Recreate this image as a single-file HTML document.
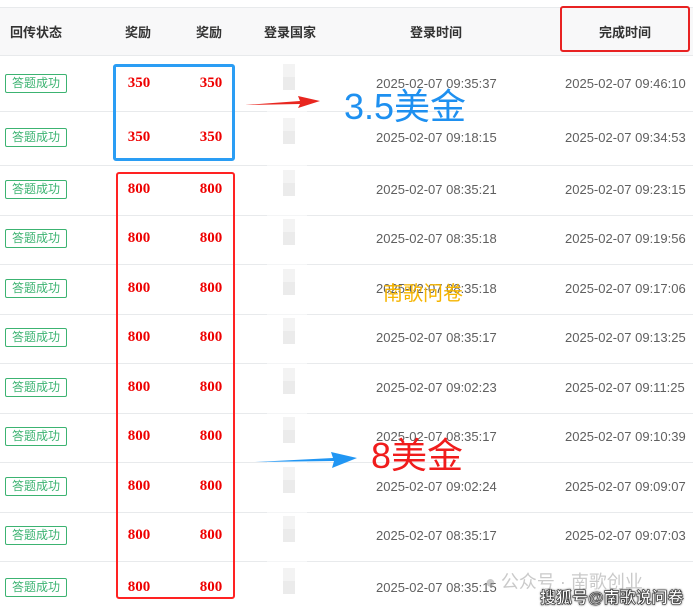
<!DOCTYPE html>
<html><head><meta charset="utf-8"><style>
*{margin:0;padding:0;box-sizing:border-box}
body{width:693px;height:610px;background:#fff;position:relative;overflow:hidden;font-family:"Liberation Sans","Noto Sans CJK SC",sans-serif}
.a{position:absolute}
.hd{position:absolute;left:0;top:7px;width:693px;height:49px;background:#f8f8f9;border-top:1px solid #e8eaec;border-bottom:1px solid #e8eaec}
.hd span{position:absolute;top:14px;font-size:13px;font-weight:bold;color:#333;transform:translateX(-50%);white-space:nowrap}
.line{position:absolute;left:0;width:693px;height:1px;background:#e8eaec}
.tag{position:absolute;left:5px;width:62px;height:19px;border:1px solid #3cb371;border-radius:2px;color:#3cb371;font-size:12px;line-height:17px;text-align:center}
.n{position:absolute;font-family:"Liberation Serif",serif;font-size:15px;font-weight:bold;color:#e00;transform:translateX(-50%)}
.d{position:absolute;font-size:13px;color:#5f5f5f;white-space:nowrap}
.bl{position:absolute;left:283px;width:12px;height:13px;background:#d6d6d6}
</style></head><body>
<div class="hd">
<span style="left:36px">回传状态</span>
<span style="left:138px">奖励</span>
<span style="left:209px">奖励</span>
<span style="left:290px">登录国家</span>
<span style="left:436px">登录时间</span>
<span style="left:625px">完成时间</span>
</div>
<div id="rows"></div>
<script>
var tops=[56,111,165];for(var i=1;i<=8;i++)tops.push(165+i*49.5);
var st=["09:35:37","09:18:15","08:35:21","08:35:18","08:35:18","08:35:17","09:02:23","08:35:17","09:02:24","08:35:17","08:35:15"];
var en=["09:46:10","09:34:53","09:23:15","09:19:56","09:17:06","09:13:25","09:11:25","09:10:39","09:09:07","09:07:03","09:07:35"];
var h="";
for(var i=0;i<11;i++){var t=tops[i],b=i<10?tops[i+1]:615,c=(t+b)/2;
if(i<10)h+='<div class="line" style="top:'+b+'px"></div>';
h+='<div class="tag" style="top:'+(c-10)+'px">答题成功</div>';
var v=i<2?"350":"800";
h+='<div class="n" style="left:139px;top:'+(c-9)+'px">'+v+'</div><div class="n" style="left:211px;top:'+(c-9)+'px">'+v+'</div>';
h+='<div class="bl" style="top:'+(c-20)+'px;opacity:.6"></div><div class="bl" style="top:'+(c-7)+'px"></div>';
h+='<div class="d" style="left:376px;top:'+(c-8)+'px">2025-02-07 '+st[i]+'</div>';
if(i<10)h+='<div class="d" style="left:565px;top:'+(c-8)+'px">2025-02-07 '+en[i]+'</div>';}
document.getElementById('rows').innerHTML=h;
</script>
<div class="a" style="left:267px;top:56px;width:40px;height:554px;background:rgba(255,255,255,.5)"></div>
<div class="a" style="left:113px;top:64px;width:122px;height:97px;border:3px solid #2a9df4;border-radius:3px"></div>
<div class="a" style="left:116px;top:172px;width:119px;height:427px;border:2.5px solid #f22;border-radius:3px"></div>
<div class="a" style="left:560px;top:6px;width:130px;height:46px;border:2.5px solid #e82222;border-radius:3px"></div>
<svg class="a" style="left:0;top:0" width="693" height="610">
<polygon points="245,105 300,101 298,96 320,101 298,108 300,104" fill="#e8261f"/>
<polygon points="255,462 333,458 331,452 357,458 332,468 334,461" fill="#2196f3"/>
</svg>
<div class="a" style="left:344px;top:86px;font-size:36px;color:#1e90f0;white-space:nowrap;line-height:42px">3.5美金</div>
<div class="a" style="left:371px;top:435px;font-size:36px;color:#f01c1c;white-space:nowrap;line-height:42px">8美金</div>
<div class="a" style="left:383px;top:277px;font-size:20px;color:#f5b400;white-space:nowrap">南歌问卷</div>
<div class="a" style="left:485px;top:568px;font-size:18px;color:rgba(150,150,150,.5);white-space:nowrap">● 公众号 · 南歌创业</div>
<div class="a" style="left:540px;top:584px;font-size:16px;font-weight:bold;color:#fff;-webkit-text-stroke:0.6px #333;text-shadow:0 0 2px #000;white-space:nowrap">搜狐号@南歌说问卷</div>
</body></html>
